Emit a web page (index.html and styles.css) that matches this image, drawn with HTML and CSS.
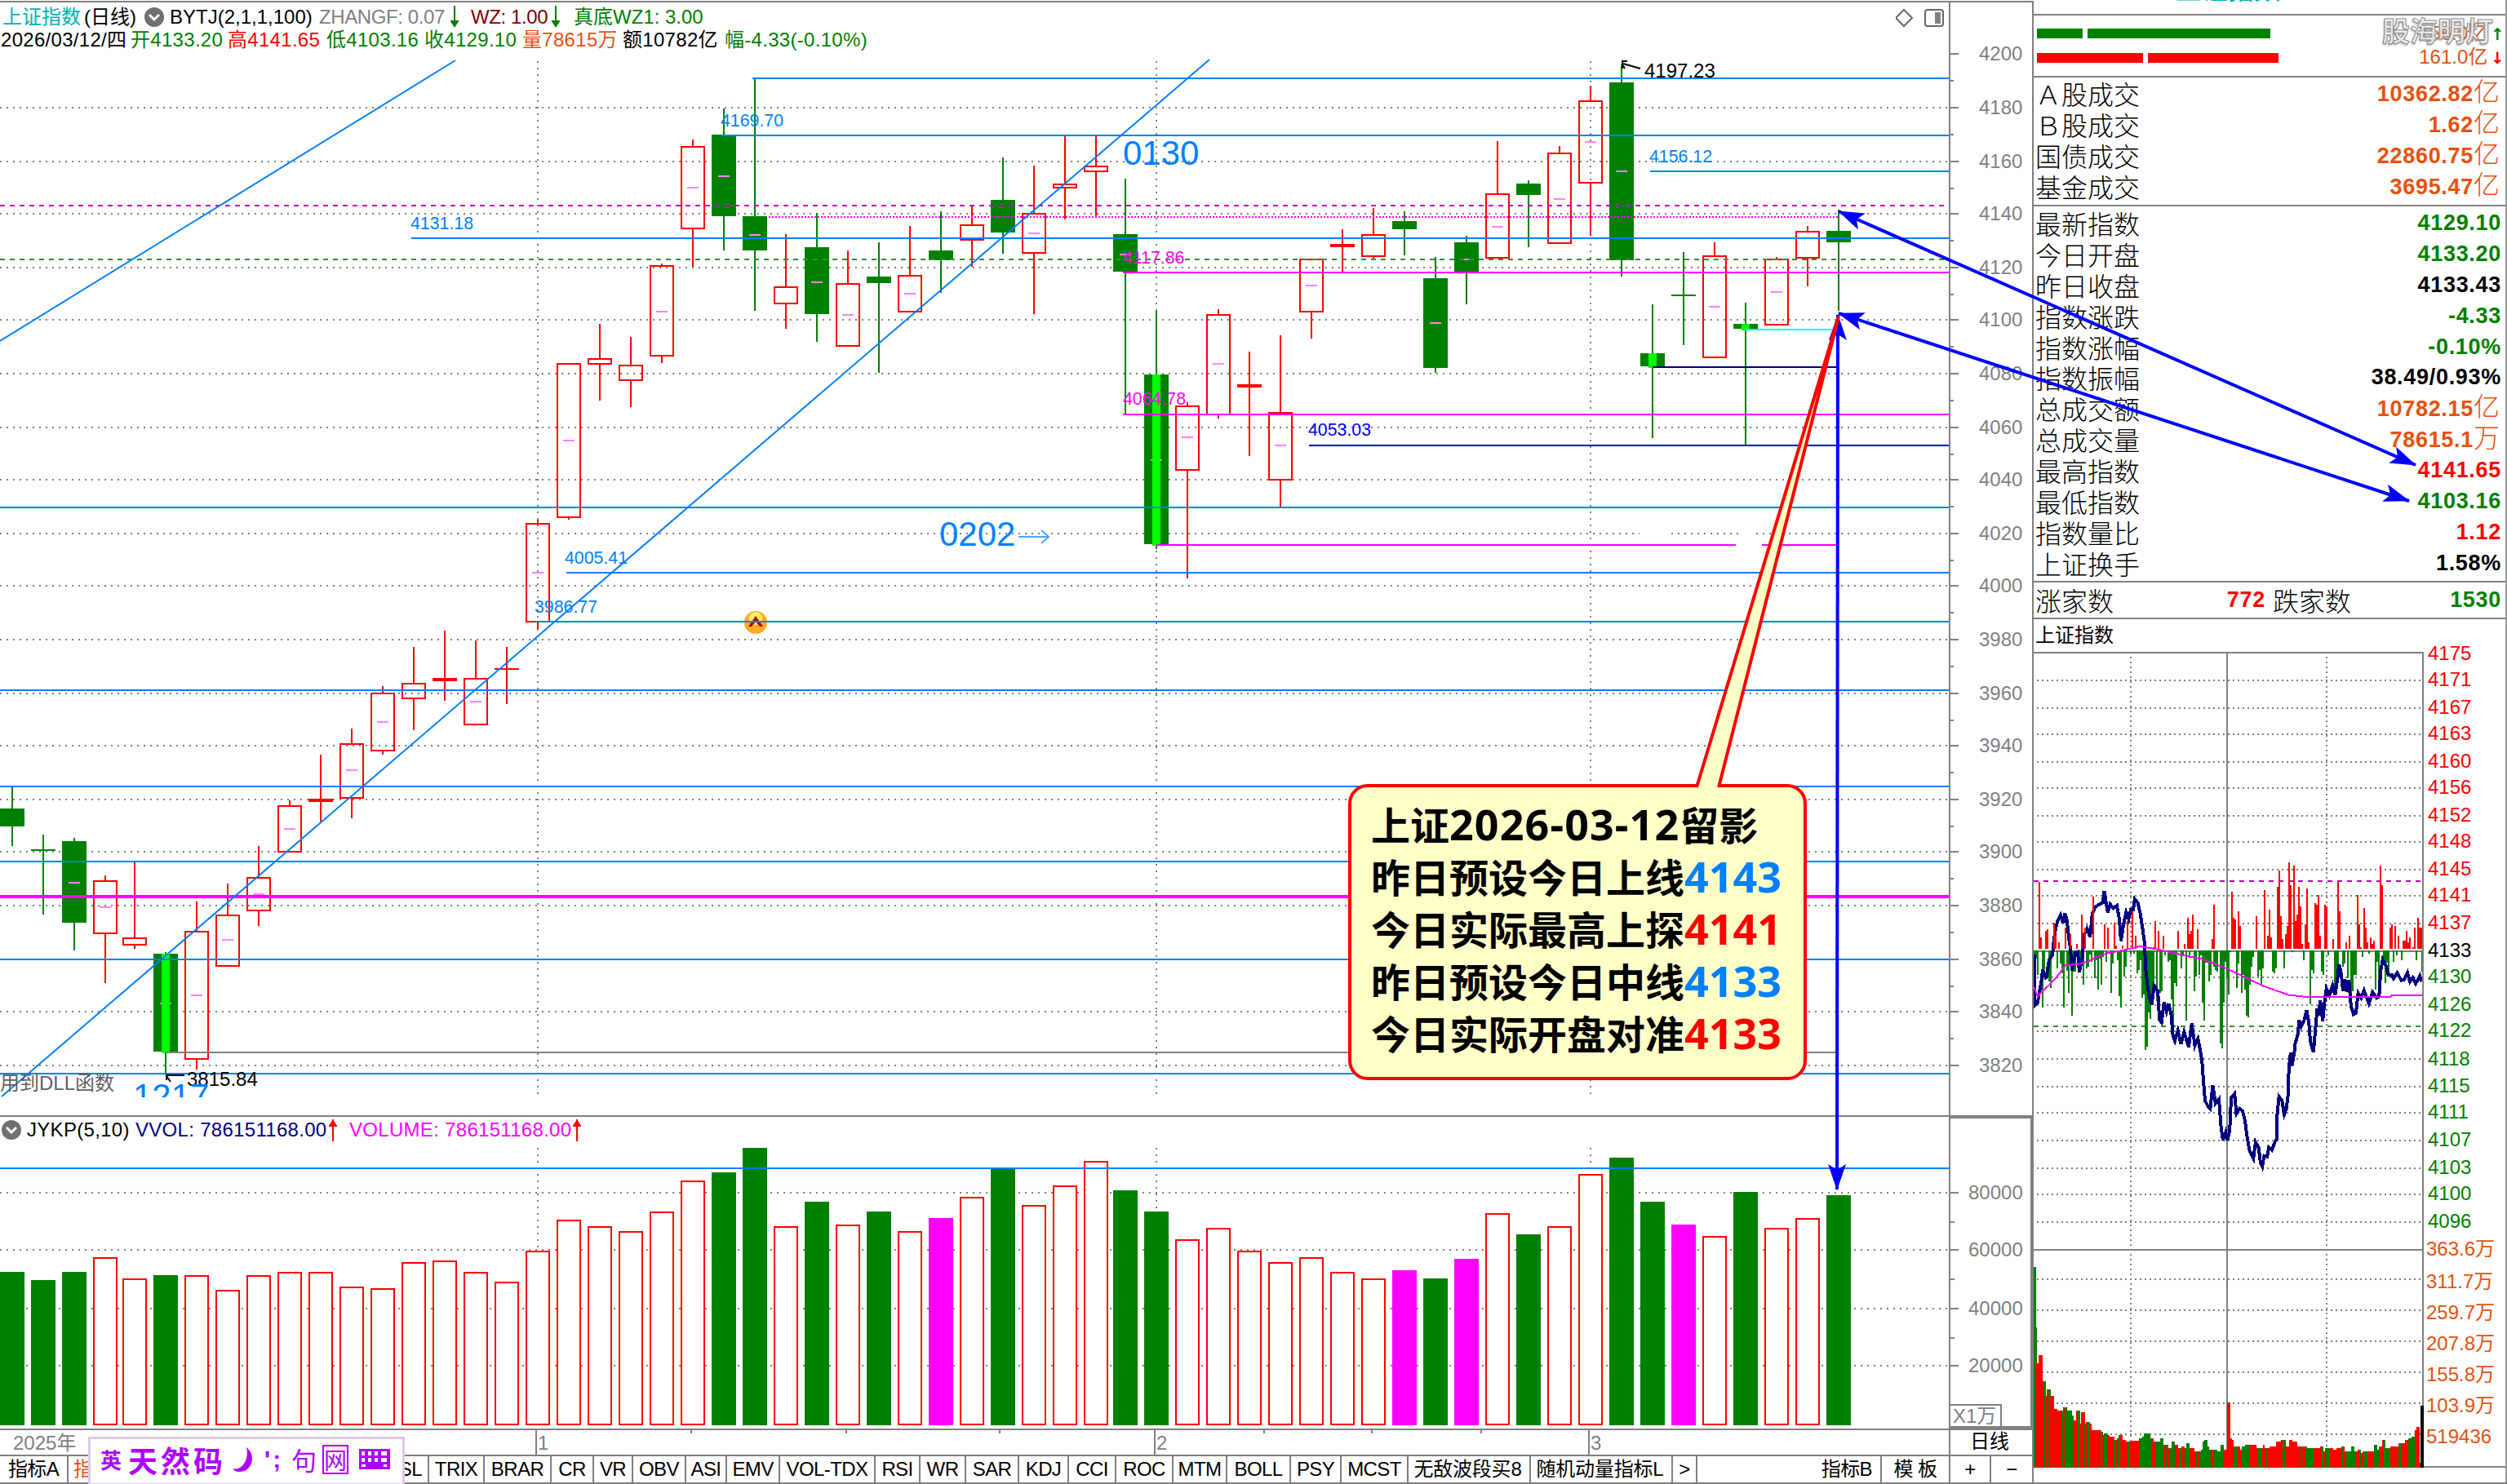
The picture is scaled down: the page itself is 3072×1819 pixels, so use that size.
FILE: index.html
```html
<!DOCTYPE html>
<html lang="zh-CN">
<head>
  <meta charset="utf-8">
  <title>上证指数(日线)</title>
  <link rel="stylesheet" href="styles.css">
</head>
<body>
  <div class="app">
    <div class="main">
      <div class="titles">
        <div class="title-text">
          <div class="line1">
            <span class="teal">上证指数</span>
            <span>(日线)</span>
            <svg class="drop" viewBox="0 0 24 24"><circle cx="12" cy="12" r="12"/><path d="M6 9l6 6 6-6"/></svg>
            <span>BYTJ(2,1,1,100)</span>
            <span class="gray tight">ZHANGF: 0.07</span>
            <svg class="arrow green" viewBox="0 0 10 28"><path d="M5 0V26M1 19h8l-4 6z"/></svg>
            <span class="maroon tight">WZ: 1.00</span>
            <svg class="arrow green" viewBox="0 0 10 28"><path d="M5 0V26M1 19h8l-4 6z"/></svg>
            <span class="green">真底WZ1: 3.00</span>
          </div>
          <div class="line2">
            <span>2026/03/12/四</span>
            <span class="green">开4133.20</span>
            <span class="red">高4141.65</span>
            <span class="green">低4103.16</span>
            <span class="green">收4129.10</span>
            <span class="orange">量78615万</span>
            <span>额10782亿</span>
            <span class="green">幅-4.33(-0.10%)</span>
          </div>
        </div>
        <svg class="tools" viewBox="0 0 60 24">
          <path d="M0 12L10 2L20 12L10 22Z"/>
          <rect x="36" y="2" width="22" height="20" rx="3"/>
          <rect class="fill" x="48" y="5" width="7" height="14"/>
        </svg>
        <div class="axis-top"></div>
      </div>

      <svg id="price" class="price" viewBox="0 66 2492 1301"></svg>

      <div class="vol-title">
        <div class="vol-text">
          <svg class="drop" viewBox="0 0 24 24"><circle cx="12" cy="12" r="12"/><path d="M6 9l6 6 6-6"/></svg>
          <span>JYKP(5,10)</span>
          <span class="navy">VVOL: 786151168.00</span>
          <svg class="arrow red" viewBox="0 0 10 28"><path d="M5 1V28M1 9h8l-4 -6z"/></svg>
          <span class="magenta">VOLUME: 786151168.00</span>
          <svg class="arrow red" viewBox="0 0 10 28"><path d="M5 1V28M1 9h8l-4 -6z"/></svg>
        </div>
        <div class="vol-corner"></div>
      </div>

      <svg id="volume" class="volume" viewBox="0 1402 2492 349"></svg>

      <div class="dates">
        <svg id="dates" class="date-axis" viewBox="0 1753 2388 30"></svg>
        <span class="period">日线</span>
      </div>

      <div class="tabs">
        <span>指标A</span><span class="orange cut">指</span><span class="sl">SL</span><span>TRIX</span><span>BRAR</span><span>CR</span><span>VR</span><span>OBV</span><span>ASI</span><span>EMV</span><span>VOL-TDX</span><span>RSI</span><span>WR</span><span>SAR</span><span>KDJ</span><span>CCI</span><span>ROC</span><span>MTM</span><span>BOLL</span><span>PSY</span><span>MCST</span><span class="wide">无敌波段买8</span><span class="wide">随机动量指标L</span><span>&gt;</span><span class="end">指标B</span><span>模 板</span><span>+</span><span>−</span>
      </div>
    </div>

    <div class="side">
      <div class="name"><span class="teal">上证指数</span></div>
      <div class="flow">
        <div class="bars">
          <div class="bar up"><i></i><i></i></div>
          <div class="bar down"><i></i><i></i></div>
        </div>
        <div class="flow-val">
          <span class="orange">156.0亿 <b class="green">↑</b></span>
          <span class="orange">161.0亿 <b class="red">↓</b></span>
        </div>
        <div class="mark">股海明灯</div>
      </div>
      <div class="rows amount">
        <div class="row"><span>Ａ股成交</span><b class="orange">10362.82<i>亿</i></b></div>
        <div class="row"><span>Ｂ股成交</span><b class="orange">1.62<i>亿</i></b></div>
        <div class="row"><span>国债成交</span><b class="orange">22860.75<i>亿</i></b></div>
        <div class="row"><span>基金成交</span><b class="orange">3695.47<i>亿</i></b></div>
      </div>
      <div class="rows quote">
        <div class="row"><span>最新指数</span><b class="green">4129.10</b></div>
        <div class="row"><span>今日开盘</span><b class="green">4133.20</b></div>
        <div class="row"><span>昨日收盘</span><b>4133.43</b></div>
        <div class="row"><span>指数涨跌</span><b class="green">-4.33</b></div>
        <div class="row"><span>指数涨幅</span><b class="green">-0.10%</b></div>
        <div class="row"><span>指数振幅</span><b>38.49/0.93%</b></div>
        <div class="row"><span>总成交额</span><b class="orange">10782.15<i>亿</i></b></div>
        <div class="row"><span>总成交量</span><b class="orange">78615.1<i>万</i></b></div>
        <div class="row"><span>最高指数</span><b class="red">4141.65</b></div>
        <div class="row"><span>最低指数</span><b class="green">4103.16</b></div>
        <div class="row"><span>指数量比</span><b class="red">1.12</b></div>
        <div class="row"><span>上证换手</span><b>1.58%</b></div>
      </div>
      <div class="rows breadth">
        <span>涨家数</span><b class="red">772</b><span class="fall">跌家数</span><b class="green">1530</b>
      </div>
      <div class="mini-title">上证指数</div>
      <svg id="minute" class="minute" viewBox="2492 799 580 1020"></svg>
    </div>
  </div>

  <div class="ime">
    <span class="en">英</span>
    <span class="kai">天然码</span>
    <svg class="moon" viewBox="0 0 30 36"><path d="M18 2C30 10 28 34 8 34C4 34 2 32 1 30C14 32 22 16 18 2Z"/></svg>
    <span class="punct">';</span>
    <span>句</span>
    <span class="net">网</span>
    <svg class="keys" viewBox="0 0 38 30"><path fill-rule="evenodd" d="M0 2H38V27H0ZM3 5V10H7V5ZM11 5V10H15V5ZM19 5V10H23V5ZM27 5V10H34V5ZM3 13V18H7V13ZM11 13V18H15V13ZM19 13V18H23V13ZM27 13V18H34V13ZM3 21V24H8V21ZM30 21V24H34V21Z"/></svg>
  </div>

  <div class="note">
    <p>上证<em class="date">2026-03-12</em>留影</p>
    <p>昨日预设今日上线<em class="blue">4143</em></p>
    <p>今日实际最高上探<em class="red">4141</em></p>
    <p>昨日预设今日中线<em class="blue">4133</em></p>
    <p>今日实际开盘对准<em class="red">4133</em></p>
  </div>

  <svg class="overlay" viewBox="0 0 3072 1819">
    <defs>
      <marker id="head" markerUnits="userSpaceOnUse" markerWidth="34" markerHeight="24" refX="31" refY="12" orient="auto-start-reverse">
        <path d="M0 1L32 12L0 23L7 12Z" fill="#00f"/>
      </marker>
    </defs>
    <g stroke="#00f" stroke-width="4">
      <path d="M2253 259L2960 570" marker-start="url(#head)" marker-end="url(#head)"/>
      <path d="M2253 384L2952 614" marker-start="url(#head)" marker-end="url(#head)"/>
      <path d="M2252 386L2251 1458" marker-start="url(#head)" marker-end="url(#head)"/>
    </g>
    <path d="M2079 967L2253 388L2106 967Z" fill="#ffffc8"/>
    <path d="M2079 965L2253 388L2106 965" fill="none" stroke="#f00" stroke-width="4"/>
  </svg>

  <script src="chart.js"></script>
</body>
</html>
```
FILE: styles.css
```css
* {
  box-sizing: border-box;
}

body {
  margin: 0;
  background: #fff;
  color: #000;
  font-family: "Liberation Sans", "Noto Sans CJK SC", sans-serif;
  font-size: 24px;
  position: relative;
  width: 3072px;
  height: 1819px;
  overflow: hidden;
}

.app {
  display: grid;
  grid-template-columns: 2492px 580px;
  height: 1819px;
}

.main {
  display: flex;
  flex-direction: column;
}

svg {
  display: block;
}

.teal { color: #00b0b0; }
.gray { color: #808080; }
.maroon { color: #800000; }
.green { color: #008000; }
.red { color: #f00; }
.orange { color: #e8500c; }
.navy { color: #000080; }
.magenta { color: #f0f; }
.blue { color: #0080ff; }
.tight { letter-spacing: -0.4px; }

/* title lines */
.titles {
  display: flex;
  height: 66px;
  border-top: 2px solid #808080;
  margin-top: 1px;
  flex: 0 0 65px;
}

.title-text {
  flex: 1;
  padding-top: 4px;
}

.line1,
.line2 {
  display: grid;
  align-items: center;
  height: 28px;
  line-height: 28px;
  white-space: nowrap;
}

.line1 {
  padding-left: 3px;
  grid-template-columns: 100px 74px 31px 183px 161px 25px 99px 27px 200px;
}

.line2 {
  padding-left: 1px;
  letter-spacing: 0.3px;
  grid-template-columns: 159px 119px 121px 120px 120px 123px 125px 180px;
}

.drop {
  width: 24px;
  height: 24px;
  fill: #707070;
}

.drop path {
  fill: none;
  stroke: #fff;
  stroke-width: 3;
}

.arrow {
  width: 10px;
  height: 28px;
  fill: currentColor;
  stroke: currentColor;
  stroke-width: 2;
}

.tools {
  width: 60px;
  height: 24px;
  margin: 7px 5px 0 0;
  fill: none;
  stroke: #666;
  stroke-width: 2;
}

.tools .fill {
  fill: #808080;
  stroke: none;
}

.axis-top {
  width: 104px;
  border-left: 2px solid #808080;
  border-right: 2px solid #808080;
}

.price {
  flex: 0 0 1301px;
  width: 2492px;
}

.vol-title {
  display: flex;
  flex: 0 0 35px;
}

.vol-text {
  flex: 1;
  display: grid;
  grid-template-columns: 31px 133px 237px 25px 274px 20px;
  align-items: center;
  padding: 0 0 2px 2px;
  border-top: 2px solid #808080;
  letter-spacing: 0.3px;
  white-space: nowrap;
}

.vol-corner {
  width: 104px;
  border: 4px solid #808080;
  border-left-width: 2px;
  border-bottom: 0;
}

.volume {
  flex: 0 0 349px;
  width: 2492px;
}

.dates {
  display: flex;
  flex: 0 0 32px;
  border-top: 2px solid #808080;
}

.date-axis {
  width: 2388px;
  height: 30px;
}

.period {
  flex: 1;
  text-align: center;
  line-height: 28px;
  padding-right: 4px;
  border-left: 2px solid #808080;
  border-right: 2px solid #808080;
}

.tabs {
  display: grid;
  flex: 0 0 36px;
  grid-template-columns: 84px 26px 416px 68px 82px 52px 48px 65px 50px 65px 117px 55px 56px 65px 61px 58px 70px 66px 78px 62px 82px 150px 174px 30px 226px 84px 50px 52px;
  border-top: 2px solid #808080;
  border-bottom: 2px solid #808080;
}

.tabs span {
  border-right: 2px solid #808080;
  text-align: center;
  line-height: 31px;
  white-space: nowrap;
  letter-spacing: -0.6px;
}

.tabs .cut {
  border: 0;
  text-align: left;
  padding-left: 6px;
}

.tabs .wide {
  letter-spacing: -0.2px;
  padding-right: 3px;
}

.tabs .sl {
  text-align: right;
  padding-right: 7px;
}

.tabs .end {
  text-align: right;
  padding-right: 10px;
}

/* quote panel */
.side {
  display: flex;
  flex-direction: column;
  border-right: 2px solid #999;
}

.name {
  height: 19px;
  flex: 0 0 19px;
  border-bottom: 2px solid #808080;
  overflow: hidden;
}

.name span {
  display: block;
  font-size: 32px;
  line-height: 32px;
  margin: -28px 0 0 174px;
}

.flow {
  display: flex;
  justify-content: space-between;
  flex: 0 0 76px;
  height: 76px;
  position: relative;
  border-bottom: 2px solid #808080;
  padding: 7px 5px 0 4px;
}

.bars {
  padding-top: 9px;
}

.bar {
  display: flex;
  gap: 6px;
  height: 12px;
}

.bar.up { margin-bottom: 18px; }

.bar.up i { background: #008000; width: 224px; }
.bar.up i:first-child { width: 56px; }
.bar.down i { background: #f00; width: 160px; }
.bar.down i:first-child { width: 130px; }

.flow-val span {
  display: block;
  height: 29px;
  line-height: 29px;
}

.flow-val b {
  display: inline-block;
  width: 13px;
  margin-left: -3px;
  font-family: "DejaVu Sans", sans-serif;
  font-size: 20px;
}

.mark {
  position: absolute;
  right: 15px;
  top: -6px;
  color: rgba(255, 255, 255, 0.6);
  font-family: "Noto Sans CJK SC", sans-serif;
  font-size: 34px;
  font-weight: bold;
  line-height: 48px;
  -webkit-text-stroke: 1px #888;
  text-shadow: -1px 2px 2px #bbb;
}

.rows {
  border-bottom: 2px solid #808080;
  padding: 0 5px 0 2px;
  white-space: nowrap;
}

.row {
  display: flex;
  justify-content: space-between;
  height: 37.9px;
  line-height: 38px;
}

.rows span {
  font-family: "Noto Sans CJK SC", sans-serif;
  font-weight: 300;
  font-size: 32px;
}

.rows b {
  font-size: 27px;
  letter-spacing: 0.7px;
}

.rows i {
  font: 300 32px "Noto Sans CJK SC", sans-serif;
  line-height: 30px;
  letter-spacing: 0;
  margin-right: 2px;
}

.amount {
  flex: 0 0 158px;
}

.quote {
  flex: 0 0 461px;
  padding-top: 1px;
}

.breadth {
  display: flex;
  flex: 0 0 45px;
  line-height: 42px;
}

.breadth b:nth-child(2) {
  width: 186px;
  text-align: right;
}

.breadth .fall {
  margin-left: 9px;
}

.breadth b:last-child {
  margin-left: auto;
}

.mini-title {
  flex: 0 0 40px;
  line-height: 40px;
  padding-left: 2px;
}

.minute {
  flex: 0 0 1020px;
  width: 580px;
  overflow: visible;
}

/* input method bar floating above the tabs */
.ime {
  position: absolute;
  left: 108px;
  top: 1761px;
  width: 388px;
  height: 60px;
  display: grid;
  grid-template-columns: 34px 127px 40px 33px 38px 45px 38px;
  align-items: center;
  padding: 0 0 4px 12px;
  background: #fff;
  border: 3px solid #dccbe8;
  color: #b000ff;
  font-size: 31px;
  line-height: 40px;
}

.ime span {
  font-family: "Noto Sans CJK SC", sans-serif;
  white-space: nowrap;
}

.ime .en { font-size: 26px; font-weight: bold; }
.ime .kai { font-weight: bold; font-size: 36px; letter-spacing: 4px; }
.ime .punct { font: bold 30px "Liberation Sans", sans-serif; letter-spacing: 3px; }

.ime .net {
  width: 32px;
  font-size: 28px;
  line-height: 32px;
  border: 2px solid #b000ff;
}

.ime svg {
  fill: #b000ff;
}

.ime .moon { width: 30px; height: 34px; }
.ime .keys { width: 38px; height: 30px; }

/* yellow callout */
.note {
  position: absolute;
  left: 1652px;
  top: 961px;
  width: 562px;
  height: 363px;
  padding: 12px 0 0 24px;
  background: #ffffc8;
  border: 4px solid #f00;
  border-radius: 24px;
}

.note p {
  margin: 0;
  height: 64.1px;
  line-height: 64px;
  font-family: "Noto Sans CJK SC", sans-serif;
  font-weight: bold;
  font-size: 48px;
  white-space: nowrap;
}

.note em {
  font-family: "Noto Sans", sans-serif;
  font-style: normal;
  font-size: 52px;
  line-height: 50px;
}

.note .date {
  letter-spacing: 1.1px;
}

.overlay {
  position: absolute;
  left: 0;
  top: 0;
  width: 3072px;
  height: 1819px;
}

/* chart parts */
.crisp {
  shape-rendering: crispEdges;
}

.lbl {
  font-size: 24px;
}

.lbl.small {
  font-size: 21.3px;
}

.lbl.big {
  font-size: 42px;
}
```
FILE: chart.js
```js
const NS = 'http://www.w3.org/2000/svg';
const GRAY = '#808080', BLUE = '#0080ff', MAG = '#f0f', GREEN = '#008000', RED = '#f00', ORANGE = '#e8500c';

function add(parent, tag, attrs, text) {
  const el = document.createElementNS(NS, tag);
  for (const k in attrs) el.setAttribute(k, attrs[k]);
  if (text !== undefined) el.textContent = text;
  parent.appendChild(el);
  return el;
}
function box(p, x, y, w, h, fill) { return add(p, 'rect', { x, y, width: w, height: h, fill, class: 'crisp' }); }
function hline(p, x1, x2, y, color, w = 2, dash) {
  const a = { x1, x2, y1: y, y2: y, stroke: color, 'stroke-width': w, class: 'crisp' };
  if (dash) a['stroke-dasharray'] = dash;
  return add(p, 'line', a);
}
function vline(p, x, y1, y2, color, w = 2, dash) {
  const a = { x1: x, x2: x, y1, y2, stroke: color, 'stroke-width': w, class: 'crisp' };
  if (dash) a['stroke-dasharray'] = dash;
  return add(p, 'line', a);
}
function label(p, x, y, s, color, cls = '') { return add(p, 'text', { x, y, fill: color, class: 'lbl ' + cls }, s); }

function cx(i) { return i < 4 ? 15 + 38 * i : i < 36 ? 203 + 38 * (i - 5) : 1379 + 38 * (i - 36); }

// type, high, body top, body bottom, low, middle mark (0 = none); b = green with bright core
const candles = [
  ['g',965,991,1013,1037,0],['g',1023,1041,1043,1121,0],['g',1027,1031,1131,1165,1082],['r',1073,1079,1145,1205,1112],
  ['r',1057,1149,1159,1163,0],['b',1167,1169,1289,1315,1230],['r',1105,1141,1299,1311,1220],['r',1083,1121,1185,1185,1152],
  ['r',1037,1075,1117,1135,1096],['r',981,987,1045,1045,1016],['r',925,979,983,1007,0],['r',893,911,979,1003,944],
  ['r',841,849,921,925,885],['r',793,837,857,895,0],['r',773,831,835,859,0],['r',785,831,889,889,860],
  ['r',793,819,821,863,0],['r',637,641,763,771,702],['r',445,445,635,637,540],['r',397,439,447,491,0],
  ['r',413,447,467,499,0],['r',323,325,437,445,382],['r',171,179,281,327,230],['g',133,165,265,307,216],
  ['g',96,265,307,381,288],['r',287,351,373,403,0],['g',261,303,385,419,346],['r',307,347,425,425,386],
  ['g',297,339,347,457,0],['r',277,337,383,383,360],['g',259,307,319,359,0],['r',252,275,295,327,0],
  ['g',193,245,285,311,0],['r',203,261,311,385,286],['r',167,225,231,269,0],['r',167,203,211,265,0],
  ['g',219,287,333,507,312],['b',381,459,667,673,564],['r',493,497,577,709,536],['r',379,385,509,513,446],
  ['r',431,471,475,559,0],['r',411,505,589,621,546],['r',317,317,383,415,350],['r',281,299,303,333,0],
  ['r',255,287,315,319,0],['g',259,271,281,313,0],['g',315,341,451,457,396],['g',289,297,333,373,318],
  ['r',173,237,317,317,278],['g',221,225,239,303,0],['r',179,187,299,299,244],['r',105,123,225,289,174],
  ['g',79,101,319,339,210],['b',373,433,449,537,0],['g',309,361,363,423,0],['r',297,313,439,439,376],
  ['b',371,397,403,545,0],['r',315,317,399,399,358],['r',277,283,317,351,0],['g',257,283,297,381,0]
];

function drawPrice() {
  const p = document.getElementById('price');
  const gridY = [132,198,262,328,392,458,524,588,654,718,784,850,914,980,1044,1110,1176,1240,1306];
  gridY.forEach(y => hline(p, 0, 2386, y, GRAY, 2, '2 6'));
  [659, 1417, 1949].forEach(x => vline(p, x, 75, 1344, GRAY, 2, '2 6'));
  box(p, 2009, 640, 38, 20, '#fff');
  box(p, 2131, 640, 21, 20, '#fff');

  candles.forEach(([t, h, top, bot, low, mid], i) => {
    const x = cx(i), c = t === 'r' ? RED : GREEN;
    if (h < top) box(p, x - 1, h, 2, top - h, c);
    if (low > bot) box(p, x - 1, bot, 2, low - bot, c);
    if (t === 'r' && bot - top > 4) {
      add(p, 'rect', { x: x - 14, y: top + 1, width: 28, height: bot - top - 2, fill: 'none', stroke: RED, 'stroke-width': 2, class: 'crisp' });
    } else {
      box(p, x - 15, top, 30, bot - top, c);
    }
    if (mid) box(p, x - 7, mid - 1, 14, 2, '#ff80ff');
    if (t === 'b') box(p, x - 5, top, 10, bot - top + 2, '#0f0');
  });

  // support and resistance
  hline(p, 0, 2382, 252, '#c000c0', 2, '6 6');
  hline(p, 0, 2382, 318, '#309030', 2, '6 6');
  hline(p, 942, 2254, 266, MAG, 2, '2 2');
  [[922,96],[884,166],[504,292],[2022,210],[0,622],[694,702],[656,762],[0,846],[0,964],[0,1056],[0,1176],[0,1316]]
    .forEach(([x, y]) => hline(p, x, 2388, y, BLUE));
  hline(p, 0, 2388, 1099, MAG, 4);
  hline(p, 1376, 2388, 334, MAG);
  hline(p, 1376, 2388, 508, MAG);
  hline(p, 1417, 2127, 668, MAG);
  hline(p, 2159, 2251, 668, MAG);
  hline(p, 1604, 2388, 546, '#00e');
  hline(p, 2025, 2251, 450, '#000080');
  hline(p, 2139, 2245, 404, '#0ff');
  hline(p, 203, 2251, 1290, GRAY);
  add(p, 'path', { d: 'M0 418L558 74M2 1344L1482 73', stroke: BLUE, 'stroke-width': 2 });

  [[883,155,'4169.70'],[503,281,'4131.18'],[692,691,'4005.41'],[655,751,'3986.77'],[2021,199,'4156.12']]
    .forEach(([x, y, s]) => label(p, x, y, s, BLUE, 'small'));
  label(p, 1376, 323, '4117.86', MAG, 'small');
  label(p, 1376, 496, '4064.78', MAG, 'small');
  label(p, 1603, 534, '4053.03', '#00f', 'small');
  label(p, 1376, 202, '0130', BLUE, 'big');
  label(p, 1151, 669, '0202', BLUE, 'big');
  add(p, 'path', { d: 'M1248 658H1284M1276 650L1285 658L1276 666', fill: 'none', stroke: '#4aa5ff', 'stroke-width': 2 });
  label(p, 2015, 95, '4197.23', '#000');
  add(p, 'path', { d: 'M1988 84V75H1994M1989 78L2010 84M1988 79L1991 84', fill: 'none', stroke: '#000', 'stroke-width': 2 });
  label(p, 229, 1331, '3815.84', '#000');
  add(p, 'path', { d: 'M204 1324V1318H226M204 1319L209 1326', fill: 'none', stroke: '#000', 'stroke-width': 2 });
  label(p, 0, 1336, '用到DLL函数', '#606060');

  const clip = add(p, 'clipPath', { id: 'cut' });
  add(clip, 'rect', { x: 0, y: 1300, width: 400, height: 45 });
  label(p, 163, 1358, '1217', BLUE, 'big').setAttribute('clip-path', 'url(#cut)');

  // signal icon
  add(p, 'circle', { cx: 926, cy: 763, r: 14, fill: '#fa2' });
  add(p, 'circle', { cx: 926, cy: 758, r: 8, fill: '#fe6' });
  add(p, 'path', { d: 'M917 768L926 755L935 768L931 768L926 762L921 768Z', fill: '#a01010' });
  hline(p, 912, 940, 762, BLUE);

  // axis
  vline(p, 2389, 66, 1367, GRAY);
  vline(p, 2491, 66, 1367, GRAY);
  [66].concat(gridY).forEach((y, i) => {
    hline(p, 2390, 2400, y, GRAY);
    if (i < 19) hline(p, 2390, 2394, y + 33, GRAY);
    label(p, 2425, y + 8, 4200 - 20 * i, GRAY);
  });
  // the top label sticks out above the viewBox
  p.style.overflow = 'visible';
}

const vols = '597g 627g 597g 543r 621r 609g 609r 663r 609r 597r 597r 651r 657r 561r 555r 597r 633r 519r 405r 429r 447r 375r 261r 231g 141g 429r 339g 423r 375g 447r 399m 321r 219g 351r 279r 189r 297g 375g 477r 435r 519r 561r 543r 597r 621r 591m 621g 549m 381r 459g 429r 237r 177g 339g 423m 465r 303g 435r 399r 315g'.split(' ');

function drawVolume() {
  const p = document.getElementById('volume');
  const rows = [1462, 1532, 1604, 1674];
  rows.forEach(y => hline(p, 0, 2386, y, GRAY, 2, '2 6'));
  [659, 1417, 1949].forEach(x => vline(p, x, 1407, 1746, GRAY, 2, '2 6'));
  vols.forEach((v, i) => {
    const top = 1360 + parseInt(v) / 3, x = cx(i), t = v.slice(-1);
    if (t === 'r') {
      add(p, 'rect', { x: x - 14, y: top + 1, width: 28, height: 1745 - top, fill: '#fff', stroke: RED, 'stroke-width': 2, class: 'crisp' });
    } else {
      box(p, x - 15, top, 30, 1747 - top, t === 'g' ? GREEN : MAG);
    }
  });
  hline(p, 0, 2388, 1432, BLUE);
  vline(p, 2389, 1402, 1751, GRAY);
  vline(p, 2490, 1402, 1751, GRAY, 4);
  rows.forEach((y, i) => {
    hline(p, 2390, 2400, y, GRAY);
    label(p, 2412, y + 8, 80000 - 20000 * i, GRAY);
  });
  [1498, 1568, 1640].forEach(y => hline(p, 2390, 2395, y, GRAY));
  add(p, 'path', { d: 'M2390 1722H2452V1750', fill: 'none', stroke: GRAY, 'stroke-width': 2 });
  label(p, 2393, 1744, 'X1万', GRAY);
  hline(p, 2388, 2492, 1750, GRAY, 4);
}

function drawDates() {
  const p = document.getElementById('dates');
  label(p, 16, 1777, '2025年', GRAY);
  [[657,'1'],[1415,'2'],[1947,'3']].forEach(([x, s]) => {
    vline(p, x, 1753, 1783, GRAY);
    label(p, x + 2, 1777, s, GRAY);
  });
  [847,1037,1225,1549,1681,1815].forEach(x => vline(p, x, 1753, 1757, GRAY));
}

// intraday data in plot units: x 1/2.649 px, y 1/3 px
const up = '51:903,56:1107,72:1083,77:1077,98:1053,104:1100,114:1125,135:1071,151:1095,172:1131,188:1023,198:1071,225:957,262:1059,272:1071,294:1053,299:1137,320:1137,336:1047,352:1011,363:1101,421:1143,426:1047,437:1083,453:1101,500:1083,521:1131,532:1035,537:1095,543:1083,548:1023,564:1077,612:1113,617:987,675:939,681:1035,686:1041,697:1011,702:1065,755:1029,781:933,792:1101,797:1005,802:1107,824:921,829:861,834:1029,839:1113,850:1095,855:1065,861:831,866:915,877:843,882:1047,887:1023,892:921,898:993,903:1131,914:1059,919:927,924:1125,946:981,951:987,956:951,961:1101,978:987,983:993,1004:1113,1020:903,1025:1011,1047:1125,1057:1101,1083:951,1089:1059,1094:1143,1105:999,1110:1071,1115:1125,1126:1107,1131:1131,1136:1119,1158:843,1163:915,1190:1071,1195:1059,1205:1065,1216:1101,1232:1119,1237:1119,1242:1083,1248:1125,1253:1107,1264:1143,1269:1071,1280:1035,1285:1071,1290:1071';
const down = '35:1170,40:1185,45:1245,61:1365,66:1225,82:1270,87:1293,108:1220,119:1203,125:1240,130:1365,140:1230,146:1310,156:1395,161:1232,167:1232,177:1200,183:1200,193:1280,204:1220,209:1215,214:1170,220:1197,230:1257,236:1190,241:1299,246:1185,251:1281,257:1180,267:1197,283:1311,288:1203,304:1190,310:1323,315:1365,326:1250,331:1215,347:1170,357:1167,368:1238,373:1227,378:1190,384:1330,389:1317,394:1521,400:1509,405:1383,410:1407,416:1355,421:1285,432:1340,442:1311,447:1305,458:1173,468:1197,474:1191,479:1335,484:1440,490:1275,495:1287,511:1221,516:1173,527:1413,537:1183,553:1305,559:1251,569:1245,574:1173,580:1347,585:1413,590:1200,596:1200,601:1269,606:1245,617:1215,622:1227,627:1232,638:1497,643:1515,649:1347,654:1197,659:1257,664:1317,670:1160,691:1293,697:1203,707:1311,712:1245,718:1299,723:1395,728:1401,733:1281,739:1215,744:1179,760:1251,765:1227,770:1281,776:1221,808:1233,813:1239,818:1221,845:1221,871:1160,908:1191,930:1353,935:1227,940:1239,967:1233,972:1245,988:1173,1009:1311,1014:1311,1020:1210,1036:1215,1041:1203,1052:1257,1062:1311,1067:1305,1073:1245,1078:1245,1099:1179,1120:1167,1142:1299,1147:1197,1152:1300,1168:1190,1174:1275,1179:1200,1184:1239,1200:1197,1211:1173,1227:1191,1274:1191,1293:1233';
const index = '35:1170,35:1357,45:1345,50:1310,56:1275,61:1225,72:1260,82:1190,93:1170,98:1110,103:1075,110:1045,119:1025,128:1055,133:1018,140:1045,146:1110,151:1145,156:1230,167:1165,175:1160,180:1235,190:1180,195:1100,205:1075,215:1105,222:1020,232:995,245:985,256:980,261:936,267:980,272:1015,280:985,290:1000,302:990,310:1040,315:1120,325:1050,332:1015,340:1040,347:1005,355:1005,360:966,370:980,378:1020,386:1080,392:1130,395:1220,402:1290,408:1330,415:1355,423:1285,435:1305,440:1410,447:1420,455:1345,463:1380,470:1350,478:1390,484:1470,490:1488,500:1450,510:1500,520:1455,535:1510,545:1422,555:1505,565:1480,572:1520,578:1560,582:1621,588:1707,597:1727,605:1737,613:1651,622:1717,633:1702,640:1803,646:1854,655:1823,661:1852,668:1818,673:1697,684:1682,690:1755,700:1737,710:1745,718:1783,725:1844,732:1889,745:1920,752:1860,762:1879,768:1935,774:1950,780:1910,790:1913,795:1879,805:1889,815:1859,822:1844,822:1763,828:1692,838:1707,845:1758,852:1737,858:1682,860:1591,866:1530,870:1580,878:1530,880:1500,890:1460,893:1412,900:1435,910:1410,918:1375,925:1420,930:1490,940:1530,946:1450,952:1370,957:1395,962:1338,970:1415,976:1345,982:1295,992:1320,1002:1285,1010:1320,1018:1260,1023:1206,1030:1240,1036:1305,1042:1260,1048:1308,1055:1265,1062:1360,1070:1390,1078:1385,1085:1312,1095:1330,1104:1302,1112:1325,1120:1350,1132:1308,1145:1330,1153:1325,1158:1230,1165:1188,1175:1210,1183:1245,1195:1245,1200:1258,1212:1237,1225:1265,1235:1262,1245:1237,1253:1270,1262:1255,1272:1277,1285:1248,1292:1270';
const average = '33:1290,45:1325,60:1305,80:1285,105:1255,135:1210,175:1205,205:1197,235:1180,270:1165,320:1155,375:1140,430:1150,500:1168,580:1187,655:1220,720:1255,780:1287,860:1319,910:1325,1190:1325,1195:1320,1295:1320';
// volume steps: y is 1/2.964 px from 1290
const turnover = '33:780,38:1130,48:1100,58:1195,69:1248,74:1225,85:1248,95:1295,106:1301,127:1290,138:1301,154:1318,160:1337,170:1301,181:1349,186:1307,197:1349,202:1343,213:1349,218:1372,249:1378,255:1390,260:1384,271:1390,276:1396,292:1408,302:1402,308:1390,318:1408,329:1414,345:1410,371:1402,382:1396,387:1384,408:1402,419:1414,440:1402,451:1426,467:1437,477:1414,488:1426,499:1437,509:1431,520:1437,525:1420,535:1437,550:1449,573:1443,578:1414,583:1408,593:1431,599:1443,625:1449,636:1425,647:1443,657:1272,667:1402,673:1408,678:1431,699:1443,705:1431,715:1426,752:1437,774:1426,780:1437,795:1431,818:1414,834:1408,848:1431,860:1408,870:1414,885:1431,916:1437,958:1431,969:1449,977:1437,1003:1443,1013:1437,1030:1431,1037:1449,1060:1431,1070:1449,1082:1443,1090:1455,1100:1449,1133:1426,1144:1443,1150:1431,1160:1408,1170:1437,1188:1431,1215:1420,1235:1408,1245:1402,1255:1396,1265:1372,1272:1361,1282:1490';
const sold = [[33,38],[64,69],[80,85],[122,127],[133,160],[176,181],[197,202],[208,215],[249,255],[260,270],[292,297],[302,313],[334,340],[371,415],[425,450],[456,461],[472,488],[504,509],[520,535],[556,563],[570,604],[614,645],[678,688],[705,730],[758,772],[785,790],[838,850],[898,903],[914,937],[967,972],[977,993],[1030,1035],[1045,1075],[1090,1095],[1105,1115],[1133,1150],[1168,1188],[1210,1215],[1220,1225],[1245,1270],[1282,1287]];

const pairs = s => s.split(',').map(a => a.split(':').map(Number));
const mx = x => 2480 + x / 2.649;
const my = y => 780 + y / 3;

function drawMinute() {
  const p = document.getElementById('minute');
  [834,868,900,934,966,1000,1032,1066,1098,1132,1198,1232,1264,1298,1332,1364,1398,1432,1464,1498,1568,1606,1644,1682,1720,1758]
    .forEach(y => hline(p, 2496, 2968, y, GRAY, 2, '2 4'));
  [2611, 2851].forEach(x => vline(p, x, 805, 1798, GRAY, 2, '2 4'));
  vline(p, 2729, 800, 1798, GRAY);
  hline(p, 2492, 2970, 800, GRAY);
  hline(p, 2492, 2970, 1166, GRAY);
  hline(p, 2492, 2970, 1532, GRAY);
  hline(p, 2492, 2968, 1080, '#c000c0', 2, '6 6');
  hline(p, 2492, 2968, 1258, '#309030', 2, '6 6');

  const line = s => pairs(s).map(([x, y]) => mx(x) + ',' + my(y)).join(' ');
  pairs(down).forEach(([x, y]) => box(p, mx(x) - 1, 1165, 2, my(y) - 1165, GREEN));
  add(p, 'polyline', { points: line(index), fill: 'none', stroke: '#000080', 'stroke-width': 4, class: 'crisp' });
  pairs(up).forEach(([x, y]) => box(p, mx(x) - 1, my(y), 2, 1163 - my(y), RED));
  add(p, 'polyline', { points: line(average), fill: 'none', stroke: MAG, 'stroke-width': 2, class: 'crisp' });

  const steps = pairs(turnover);
  for (let x = 33; x < 1286; x += 5.3) {
    const y = 1290 + steps.filter(s => s[0] <= x + 2).pop()[1] / 2.964;
    const isSold = sold.some(([a, b]) => x + 2.5 >= a && x + 2.5 < b);
    box(p, mx(x), y, 2.2, 1799 - y, isSold ? GREEN : RED);
  }
  box(p, mx(38), 1627, 2, 44, GREEN);
  vline(p, 2969, 800, 1798, GRAY);
  hline(p, 2968, 3070, 1798, GRAY);
  box(p, 2966, 1723, 4, 76, '#000');

  [4175,4171,4167,4163,4160,4156,4152,4148,4145,4141,4137,4133,4130,4126,4122,4118,4115,4111,4107,4103,4100,4096].forEach((n, i) => {
    const y = [800,832,866,898,932,964,998,1030,1064,1096,1130,1164,1196,1230,1262,1297,1330,1362,1396,1430,1462,1496][i];
    label(p, 2975, y + 9, n, n > 4133 ? RED : n < 4133 ? GREEN : '#000');
  });
  ['363.6万','311.7万','259.7万','207.8万','155.8万','103.9万','519436'].forEach((s, i) => {
    label(p, 2973, [1530,1570,1608,1646,1684,1722,1760][i] + 9, s, ORANGE);
  });
  vline(p, 2491, 799, 1819, GRAY);
  hline(p, 2492, 3072, 1818, GRAY);
}

drawPrice();
drawVolume();
drawDates();
drawMinute();
```
